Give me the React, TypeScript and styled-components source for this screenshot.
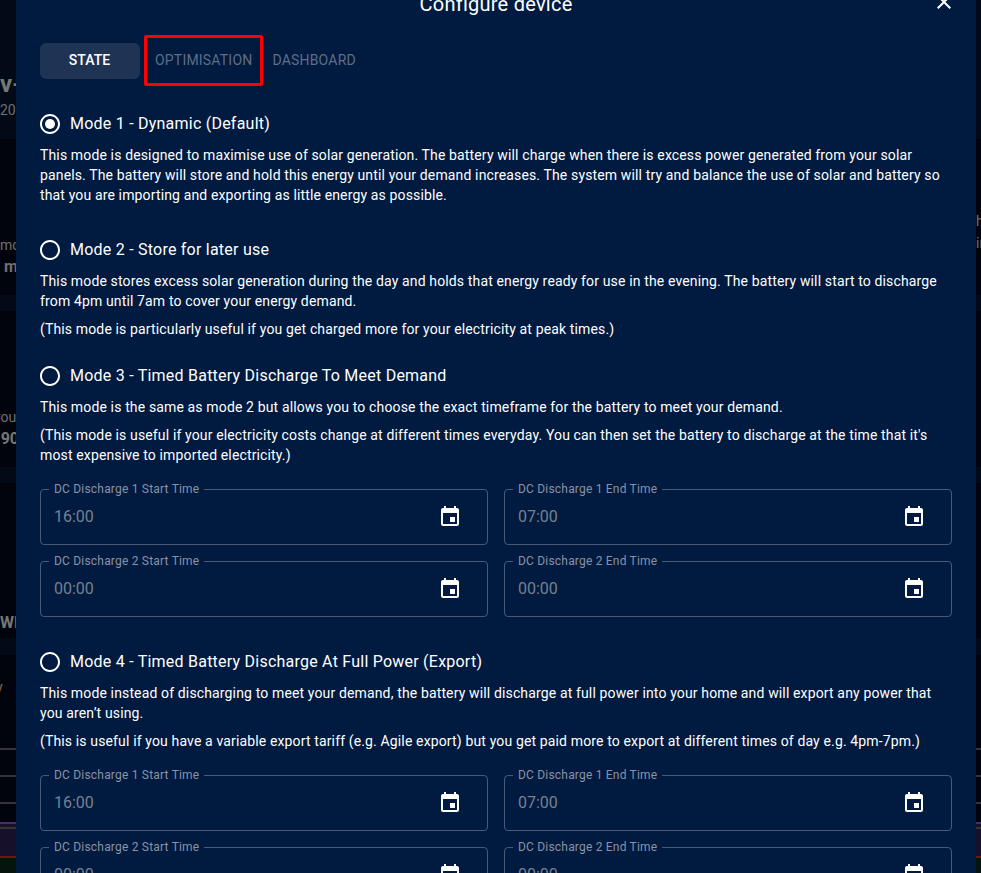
import React from 'react'
import styled, { createGlobalStyle } from 'styled-components';

const GlobalStyle = createGlobalStyle`
  html, body {
    margin: 0;
    height: 100%;
    overflow: hidden;
    background: #01040c;
    font-family: Roboto, "Liberation Sans", sans-serif;
  }
`;

const Page = styled.div`
  position: relative;
  width: 981px;
  height: 873px;
  overflow: hidden;
  display: flex;
  justify-content: space-between;
`;

const Strip = styled.div<{ w: number }>`
  width: ${p => p.w}px;
  height: 100%;
  overflow: hidden;
  display: flex;
  flex-direction: column;
`;

const Band = styled.div<{ h: number; bg?: string }>`
  height: ${p => p.h}px;
  flex: none;
  background: ${p => p.bg ?? '#01040c'};
  overflow: hidden;
  position: relative;
`;

const Scrap = styled.div<{ size?: number; bold?: boolean; top: number; left?: number; color?: string }>`
  margin-top: ${p => p.top}px;
  margin-left: ${p => p.left ?? 0}px;
  font-size: ${p => p.size ?? 14}px;
  line-height: 20px;
  font-weight: ${p => (p.bold ? 700 : 400)};
  color: ${p => p.color ?? '#6f6f6f'};
  white-space: nowrap;
`;

const Dialog = styled.div`
  position: absolute;
  top: 0;
  left: 16px;
  width: 960px;
  height: 873px;
  box-sizing: border-box;
  background: #001a40;
  overflow: hidden;
  color: #fff;
`;

const DialogHeader = styled.div`
  height: 35px;
  margin-top: -14px;
  margin-bottom: 22px;
  position: relative;
  display: flex;
  justify-content: center;
  align-items: center;
`;

const DialogTitle = styled.h2`
  margin: 0;
  font-size: 20px;
  line-height: 32px;
  font-weight: 400;
  letter-spacing: 0.25px;
  color: #fff;
`;

const CloseIcon = styled.svg`
  position: absolute;
  top: 4px;
  right: 20px;
  width: 24px;
  height: 24px;
  fill: #fff;
`;

const Body = styled.div`
  padding: 0 24px;
`;

const Tabs = styled.div`
  position: relative;
  display: flex;
  height: 36px;
  margin-bottom: 33px;
`;

const Tab = styled.div<{ active?: boolean }>`
  display: flex;
  align-items: center;
  justify-content: center;
  box-sizing: border-box;
  width: ${p => (p.active ? '100px' : 'auto')};
  padding: ${p => (p.active ? '0 1px 2px 0' : '0 9px 2px 11px')};
  margin-right: ${p => (p.active ? '4px' : '0')};
  border-radius: 6px;
  background: ${p => (p.active ? '#1f3355' : 'transparent')};
  color: ${p => (p.active ? '#fff' : '#5f6e86')};
  font-size: 14px;
  font-weight: ${p => (p.active ? 500 : 400)};
  letter-spacing: ${p => (p.active ? '0.1px' : '0.2px')};
  text-transform: uppercase;
`;

const Highlight = styled.div`
  position: absolute;
  left: 104px;
  top: -8px;
  width: 119px;
  height: 51px;
  box-sizing: border-box;
  border: 3px solid #ff0000;
  border-radius: 2px;
`;

const Mode = styled.section<{ gap: number }>`
  margin-bottom: ${p => p.gap}px;
`;

const ModeLabel = styled.div`
  display: flex;
  align-items: center;
  height: 24px;
  margin-bottom: 9px;
  font-size: 16px;
  letter-spacing: 0.23px;
  color: #fff;
`;

const ModeName = styled.span`
  margin-bottom: 2px;
`;

const RadioIcon = styled.svg`
  width: 24px;
  height: 24px;
  margin: 0 8px 0 -2px;
  fill: #fff;
  flex: none;
`;

const Text = styled.p`
  margin: 0 0 8px;
  font-size: 14px;
  line-height: 20px;
  letter-spacing: 0.14px;
  color: #fff;
`;

const FieldGrid = styled.div`
  display: grid;
  grid-template-columns: 448px 448px;
  gap: 16px;
  margin-top: 24px;
`;

const Field = styled.fieldset`
  position: relative;
  margin: 0;
  padding: 0 13px;
  height: 56px;
  box-sizing: border-box;
  border: 1px solid #4a5a74;
  border-radius: 4px;
  display: flex;
  align-items: center;
  justify-content: space-between;
`;

const FieldLegend = styled.legend`
  position: absolute;
  top: -9px;
  left: 8px;
  padding: 0 5px;
  background: #001a40;
  font-size: 12px;
  line-height: 16px;
  letter-spacing: 0.2px;
  color: #8a93a3;
`;

const FieldValue = styled.span`
  margin-bottom: 2px;
  font-size: 16px;
  color: #77818f;
`;

const CalendarIcon = styled.svg`
  width: 24px;
  height: 24px;
  margin-right: 12px;
  fill: #fff;
  flex: none;
`;

const LEFT_BANDS = [
  { h: 139, bg: '#020a18', scraps: [{ top: 74, size: 24, bold: true, text: 'v-', color: '#777' }, { top: 6, size: 14, text: '20' }] },
  { h: 156, scraps: [{ top: 96, text: 'mo' }, { top: 2, left: 4, size: 16, bold: true, text: 'm' }] },
  { h: 16, bg: '#020a18' },
  { h: 156, scraps: [{ top: 96, left: -6, text: 'you' }, { top: 2, left: -4, size: 16, bold: true, text: '.90', color: '#777' }] },
  { h: 16, bg: '#020a18' },
  { h: 155, scraps: [{ top: 130, left: 0, size: 16, bold: true, text: 'WI', color: '#777' }] },
  { h: 17, bg: '#020a18' },
  { h: 93, scraps: [{ top: 22, left: -4, size: 14, text: 'y', color: '#8a6a50' }] },
  { h: 2, bg: '#333338' },
  { h: 25 },
  { h: 2, bg: '#333338' },
  { h: 25 },
  { h: 2, bg: '#333338' },
  { h: 18 },
  { h: 2, bg: '#4a2d68' },
  { h: 3, bg: '#17102a' },
  { h: 2, bg: '#333338' },
  { h: 27, bg: '#17102a' },
  { h: 2, bg: '#7a0f16' },
  { h: 20, bg: '#06140e' },
];

const RIGHT_BANDS = [
  { h: 139, bg: '#020a18' },
  { h: 156, scraps: [{ top: 72, left: 0, text: 'ho' }, { top: 2, text: 'in' }] },
  { h: 16, bg: '#020a18' },
  { h: 156 },
  { h: 16, bg: '#020a18' },
  { h: 155 },
  { h: 17, bg: '#020a18' },
  ...LEFT_BANDS.slice(7).map(b => ({ h: b.h, bg: b.bg })),
];

const MODES = [
  {
    label: 'Mode 1 - Dynamic (Default)',
    checked: true,
    gap: 33,
    text: ['This mode is designed to maximise use of solar generation. The battery will charge when there is excess power generated from your solar panels. The battery will store and hold this energy until your demand increases. The system will try and balance the use of solar and battery so that you are importing and exporting as little energy as possible.'],
  },
  {
    label: 'Mode 2 - Store for later use',
    gap: 25,
    text: [
      'This mode stores excess solar generation during the day and holds that energy ready for use in the evening. The battery will start to discharge from 4pm until 7am to cover your energy demand.',
      '(This mode is particularly useful if you get charged more for your electricity at peak times.)',
    ],
  },
  {
    label: 'Mode 3 - Timed Battery Discharge To Meet Demand',
    fields: true,
    gap: 33,
    text: [
      'This mode is the same as mode 2 but allows you to choose the exact timeframe for the battery to meet your demand.',
      "(This mode is useful if your electricity costs change at different times everyday. You can then set the battery to discharge at the time that it's most expensive to imported electricity.)",
    ],
  },
  {
    label: 'Mode 4 - Timed Battery Discharge At Full Power (Export)',
    fields: true,
    gap: 33,
    text: [
      'This mode instead of discharging to meet your demand, the battery will discharge at full power into your home and will export any power that you aren’t using.',
      '(This is useful if you have a variable export tariff (e.g. Agile export) but you get paid more to export at different times of day e.g. 4pm-7pm.)',
    ],
  },
];

const FIELDS = [
  { label: 'DC Discharge 1 Start Time', value: '16:00' },
  { label: 'DC Discharge 1 End Time', value: '07:00' },
  { label: 'DC Discharge 2 Start Time', value: '00:00' },
  { label: 'DC Discharge 2 End Time', value: '00:00' },
];

type BandDef = { h: number; bg?: string; scraps?: { top: number; left?: number; size?: number; bold?: boolean; text: string; color?: string }[] };

function Backdrop({ w, bands }: { w: number; bands: BandDef[] }) {
  return (
    <Strip w={w}>
      {bands.map((band, index) => (
        <Band key={index} h={band.h} bg={band.bg}>
          {band.scraps?.map(s => (
            <Scrap key={s.text} top={s.top} left={s.left} size={s.size} bold={s.bold} color={s.color}>{s.text}</Scrap>
          ))}
        </Band>
      ))}
    </Strip>
  );
}

function App() {
  return (
    <Page>
      <GlobalStyle />
      <Backdrop w={16} bands={LEFT_BANDS} />
      <Backdrop w={5} bands={RIGHT_BANDS} />
      <Dialog>
        <DialogHeader>
          <DialogTitle>Configure device</DialogTitle>
          <CloseIcon viewBox="0 0 24 24">
            <path d="M19 6.41L17.59 5 12 10.59 6.41 5 5 6.41 10.59 12 5 17.59 6.41 19 12 13.41 17.59 19 19 17.59 13.41 12z" />
          </CloseIcon>
        </DialogHeader>
        <Body>
          <Tabs>
            <Tab active>State</Tab>
            <Tab>Optimisation</Tab>
            <Tab>Dashboard</Tab>
            <Highlight />
          </Tabs>
          {MODES.map(mode => (
            <Mode key={mode.label} gap={mode.gap}>
              <ModeLabel>
                <RadioIcon viewBox="0 0 24 24">
                  <path d="M12 2C6.48 2 2 6.48 2 12s4.48 10 10 10 10-4.48 10-10S17.52 2 12 2zm0 18c-4.42 0-8-3.58-8-8s3.58-8 8-8 8 3.58 8 8-3.58 8-8 8z" />
                  {mode.checked && <circle cx="12" cy="12" r="5" />}
                </RadioIcon>
                <ModeName>{mode.label}</ModeName>
              </ModeLabel>
              {mode.text.map(t => <Text key={t}>{t}</Text>)}
              {mode.fields && (
                <FieldGrid>
                  {FIELDS.map(f => (
                    <Field key={f.label}>
                      <FieldLegend>{f.label}</FieldLegend>
                      <FieldValue>{f.value}</FieldValue>
                      <CalendarIcon viewBox="0 0 24 24">
                        <path d="M17 12h-5v5h5v-5zM16 1v2H8V1H6v2H5c-1.11 0-1.99.9-1.99 2L3 19c0 1.1.89 2 2 2h14c1.1 0 2-.9 2-2V5c0-1.1-.9-2-2-2h-1V1h-2zm3 18H5V8h14v11z" />
                      </CalendarIcon>
                    </Field>
                  ))}
                </FieldGrid>
              )}
            </Mode>
          ))}
        </Body>
      </Dialog>
    </Page>
  );
}

export default App
